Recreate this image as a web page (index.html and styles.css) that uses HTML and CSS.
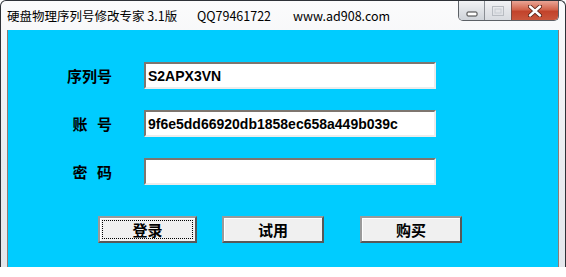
FILE: index.html
```html
<!DOCTYPE html>
<html lang="zh">
<head>
  <meta charset="UTF-8">
  <title>硬盘物理序列号修改专家</title>
  <link rel="stylesheet" href="styles.css">
</head>
<body>
  <div class="window">
    <div class="titlebar">
      <div class="caption">
        <span class="app-name">硬盘物理序列号修改专家 3.1版</span><span class="qq">QQ79461722</span><span class="site">www.ad908.com</span>
      </div>
      <div class="controls">
        <div class="btn-min">
          <svg width="12" height="6" viewBox="0 0 12 6"><rect x="1" y="1" width="10" height="4" rx="1" fill="#fff" stroke="#3a3a3a"/></svg>
        </div>
        <div class="btn-max">
          <svg width="12" height="10" viewBox="0 0 12 10"><rect x="0.5" y="0.5" width="11" height="9" fill="none" stroke="#b8bcc2"/><rect x="3" y="3" width="6" height="4" fill="none" stroke="#c8ccd2"/></svg>
        </div>
        <div class="btn-close">
          <svg width="14" height="12" viewBox="0 0 14 12">
            <path d="M2 1.5 L12 10.5 M12 1.5 L2 10.5" stroke="#5a2418" stroke-width="4.2" stroke-linecap="round"/>
            <path d="M2 1.5 L12 10.5 M12 1.5 L2 10.5" stroke="#fff" stroke-width="2.4" stroke-linecap="round"/>
          </svg>
        </div>
      </div>
    </div>

    <div class="client">
      <div class="form">
        <div class="row">
          <label>序列号</label>
          <input type="text" value="S2APX3VN">
        </div>
        <div class="row">
          <label>账 号</label>
          <input type="text" value="9f6e5dd66920db1858ec658a449b039c">
        </div>
        <div class="row">
          <label>密 码</label>
          <input type="text" value="">
        </div>
      </div>
      <div class="actions">
        <button class="login">登录</button>
        <button class="trial">试用</button>
        <button class="buy">购买</button>
      </div>
    </div>
  </div>
</body>
</html>
```

FILE: styles.css
```css
* {
  box-sizing: border-box;
}
body {
  margin: 0;
  background: #fff;
  font-family: "Noto Sans CJK SC", sans-serif;
}
.window {
  width: 566px;
  height: 267px;
  border: 1px solid #2e3238;
  border-bottom: none;
  border-radius: 6px 6px 0 0;
  background: linear-gradient(#fbfbfc, #e9ecf0 60%, #e4e7ec);
  display: flex;
  flex-direction: column;
  overflow: hidden;
}
.titlebar {
  height: 29px;
  display: flex;
  justify-content: space-between;
}
.caption {
  padding-left: 6px;
  font-size: 12.5px;
  line-height: 29px;
  color: #000;
  white-space: nowrap;
}
.app-name {
  display: inline-block;
  width: 190px;
}
.qq {
  display: inline-block;
  width: 96px;
}
.controls {
  display: flex;
  height: 20px;
  margin-right: 6px;
  border: 1px solid #5c6066;
  border-top: none;
  border-radius: 0 0 5px 5px;
  overflow: hidden;
}
.controls > div {
  display: flex;
  align-items: center;
  justify-content: center;
}
.btn-min {
  width: 26px;
  padding-top: 6px;
  background: linear-gradient(#f2f3f5, #dfe2e6 50%, #cfd3d9);
  border-right: 1px solid #8a8e94;
}
.btn-max {
  width: 27px;
  background: linear-gradient(#f2f3f5, #e3e5e9 50%, #d8dbe0);
  border-right: 1px solid #7a4a40;
}
.btn-close {
  width: 46px;
  background: linear-gradient(#e9a595, #d2644c 45%, #c2432b 55%, #c9563c);
}
.client {
  flex: 1;
  margin: 0 6px;
  background: #00ccff;
  border-left: 1px solid #8c7c74;
  border-right: 1px solid #8c7c74;
}
.form {
  padding-top: 32px;
}
.row {
  display: flex;
  align-items: center;
  height: 27px;
  margin-bottom: 21px;
}
.row:last-child {
  margin-bottom: 0;
}
.row label {
  width: 104px;
  margin-right: 32px;
  text-align: right;
  font-size: 15px;
  font-weight: bold;
  word-spacing: 6px;
  color: #000;
}
.row input {
  width: 292px;
  height: 27px;
  margin: 0;
  padding: 0 0 0 2px;
  border: 2px solid;
  border-color: #7e766f #ececec #ececec #7e766f;
  background: #fff;
  font-family: "Liberation Sans", sans-serif;
  font-size: 14px;
  font-weight: bold;
  color: #000;
  outline: none;
}
.actions {
  display: flex;
  padding-left: 90px;
  margin-top: 31px;
}
.actions button {
  height: 27px;
  margin: 0;
  padding: 0;
  border: 2px solid;
  border-color: #9a9a9a #585858 #585858 #9a9a9a;
  box-shadow: inset 1px 1px #fff;
  background: #f0f0f0;
  font-family: "Noto Sans CJK SC", sans-serif;
  font-size: 15px;
  font-weight: bold;
  color: #000;
}
.login {
  width: 99px;
  outline: 1px dotted #000;
  outline-offset: -5px;
}
.trial {
  width: 102px;
  margin-left: 25px !important;
}
.buy {
  width: 102px;
  margin-left: 36px !important;
}
```
